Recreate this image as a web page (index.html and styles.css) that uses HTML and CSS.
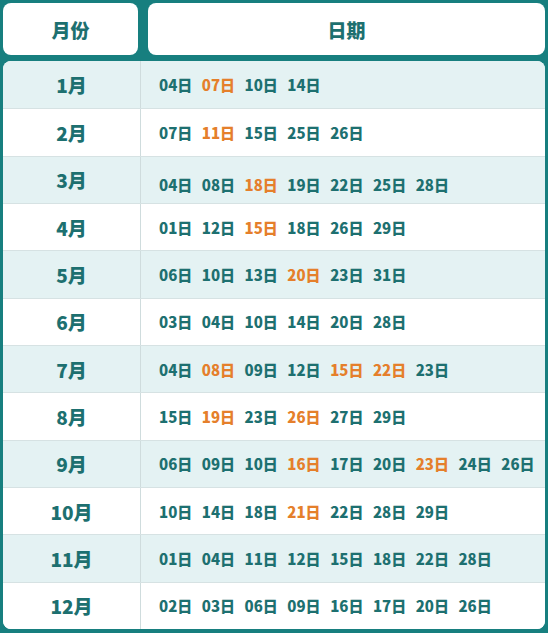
FILE: index.html
```html
<!DOCTYPE html>
<html lang="zh">
<head>
<meta charset="utf-8">
<link rel="stylesheet" href="styles.css">
</head>
<body>
<div class="page">
  <div class="head">
    <div class="hcell hmonth">月份</div>
    <div class="hcell hdate">日期</div>
  </div>
  <div class="table">
    <div class="row alt"><div class="m">1月</div><div class="d"><span>04日</span><span class="o">07日</span><span>10日</span><span>14日</span></div></div>
    <div class="row"><div class="m">2月</div><div class="d"><span>07日</span><span class="o">11日</span><span>15日</span><span>25日</span><span>26日</span></div></div>
    <div class="row alt"><div class="m">3月</div><div class="d low"><span>04日</span><span>08日</span><span class="o">18日</span><span>19日</span><span>22日</span><span>25日</span><span>28日</span></div></div>
    <div class="row"><div class="m">4月</div><div class="d"><span>01日</span><span>12日</span><span class="o">15日</span><span>18日</span><span>26日</span><span>29日</span></div></div>
    <div class="row alt"><div class="m">5月</div><div class="d"><span>06日</span><span>10日</span><span>13日</span><span class="o">20日</span><span>23日</span><span>31日</span></div></div>
    <div class="row"><div class="m">6月</div><div class="d"><span>03日</span><span>04日</span><span>10日</span><span>14日</span><span>20日</span><span>28日</span></div></div>
    <div class="row alt"><div class="m">7月</div><div class="d"><span>04日</span><span class="o">08日</span><span>09日</span><span>12日</span><span class="o">15日</span><span class="o">22日</span><span>23日</span></div></div>
    <div class="row"><div class="m">8月</div><div class="d"><span>15日</span><span class="o">19日</span><span>23日</span><span class="o">26日</span><span>27日</span><span>29日</span></div></div>
    <div class="row alt"><div class="m">9月</div><div class="d"><span>06日</span><span>09日</span><span>10日</span><span class="o">16日</span><span>17日</span><span>20日</span><span class="o">23日</span><span>24日</span><span>26日</span></div></div>
    <div class="row"><div class="m">10月</div><div class="d"><span>10日</span><span>14日</span><span>18日</span><span class="o">21日</span><span>22日</span><span>28日</span><span>29日</span></div></div>
    <div class="row alt"><div class="m">11月</div><div class="d"><span>01日</span><span>04日</span><span>11日</span><span>12日</span><span>15日</span><span>18日</span><span>22日</span><span>28日</span></div></div>
    <div class="row"><div class="m">12月</div><div class="d"><span>02日</span><span>03日</span><span>06日</span><span>09日</span><span>16日</span><span>17日</span><span>20日</span><span>26日</span></div></div>
  </div>
</div>
</body>
</html>
```
FILE: styles.css
```css
html, body {
  margin: 0;
  padding: 0;
  background: #177f7f;
}
body {
  width: 548px;
  height: 633px;
  overflow: hidden;
  font-family: "Noto Sans CJK SC", "Noto Sans", sans-serif;
  font-weight: 900;
  color: #1d7070;
}
.page {
  padding: 3px;
  display: flex;
  flex-direction: column;
  gap: 6px;
}
.head {
  display: flex;
  gap: 10px;
  height: 52px;
}
.hcell {
  background: #ffffff;
  border-radius: 8px;
  display: flex;
  align-items: center;
  justify-content: center;
  font-size: 19px;
  color: #1d7070;
}
.hmonth {
  width: 135px;
}
.hdate {
  flex: 1;
}
.table {
  height: 568px;
  background: #ffffff;
  border-radius: 8px;
  overflow: hidden;
  display: grid;
  grid-template-rows: repeat(12, 1fr);
}
.row {
  display: grid;
  grid-template-columns: 138px 1fr;
  border-top: 1px solid #d6e2e3;
  background: #ffffff;
}
.row:first-child {
  border-top: none;
}
.row.alt {
  background: #e4f2f3;
}
.m {
  border-right: 1px solid #cfdcdd;
  display: flex;
  align-items: center;
  justify-content: center;
  font-size: 19px;
  color: #1d7070;
}
.d {
  display: flex;
  align-items: center;
  gap: 9.5px;
  padding-left: 18px;
  font-size: 15px;
  color: #1d7070;
  white-space: nowrap;
}
.d.low {
  padding-top: 10px;
}
.o {
  color: #e57f2b;
}
```
